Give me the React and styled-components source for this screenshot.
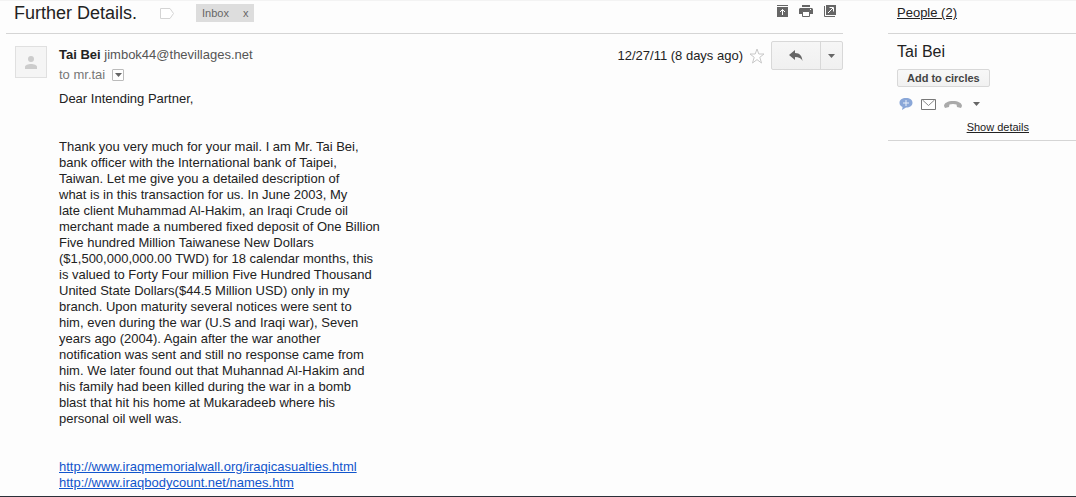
import React from "react";
import styled, { createGlobalStyle } from "styled-components";

const paragraph = [
  "Thank you very much for your mail. I am Mr. Tai Bei,",
  "bank officer with the International bank of Taipei,",
  "Taiwan. Let me give you a detailed description of",
  "what is in this transaction for us. In June 2003, My",
  "late client Muhammad Al-Hakim, an Iraqi Crude oil",
  "merchant made a numbered fixed deposit of One Billion",
  "Five hundred Million Taiwanese New Dollars",
  "($1,500,000,000.00 TWD) for 18 calendar months, this",
  "is valued to Forty Four million Five Hundred Thousand",
  "United State Dollars($44.5 Million USD) only in my",
  "branch. Upon maturity several notices were sent to",
  "him, even during the war (U.S and Iraqi war), Seven",
  "years ago (2004). Again after the war another",
  "notification was sent and still no response came from",
  "him. We later found out that Muhannad Al-Hakim and",
  "his family had been killed during the war in a bomb",
  "blast that hit his home at Mukaradeeb where his",
  "personal oil well was.",
].join("\n");

const links = [
  "http://www.iraqmemorialwall.org/iraqicasualties.html",
  "http://www.iraqbodycount.net/names.htm",
];

function Arrow({ color = "#666" }) {
  return (
    <svg width="7" height="4" viewBox="0 0 7 4">
      <path d="M0 0h7L3.5 4z" fill={color} />
    </svg>
  );
}

function ThreadHeader() {
  return (
    <Heading>
      <Subject>Further Details.</Subject>
      <IconButton aria-label="Importance">
        <svg width="14" height="11" viewBox="0 0 14 11">
          <path d="M.5.5h9.500l3.500 5-3.500 5H.5z" fill="#fff" stroke="#d4d4d4" />
        </svg>
      </IconButton>
      <Label>
        Inbox <LabelClose aria-label="Remove label Inbox">x</LabelClose>
      </Label>
      <Actions>
        <IconButton aria-label="Collapse all">
          <svg width="11" height="12" viewBox="0 0 11 12">
            <path d="M0 0h11v1H0zM0 2h11v10H0z" fill="#666" />
            <path d="M5.5 10V4.5M3 7l2.5-2.5L8 7" fill="none" stroke="#fff" />
          </svg>
        </IconButton>
        <IconButton aria-label="Print all">
          <svg width="14" height="12" viewBox="0 0 14 12">
            <path d="M3 0h8v2H3zM1 3h12l1 1v5h-3V7H3v2H0V4z" fill="#666" />
            <path d="M3.5 6.5h7v5h-7z" fill="#fff" stroke="#666" />
            <path d="M11 4h1v1h-1z" fill="#fff" />
          </svg>
        </IconButton>
        <IconButton aria-label="In new window">
          <svg width="12" height="12" viewBox="0 0 12 12">
            <path d="M2 0h10v10H2z" fill="#666" />
            <path d="M.5 1v10.500H11" fill="none" stroke="#666" />
            <path d="M4 8l5-5M5.500 2.500H9.500V6.500" fill="none" stroke="#fff" />
          </svg>
        </IconButton>
      </Actions>
    </Heading>
  );
}

function Message() {
  return (
    <Mail>
      <Avatar>
        <svg width="12" height="13" viewBox="0 0 12 13">
          <circle cx="6" cy="3" r="3" fill="#ccc" />
          <path d="M0 13v-2c0-2 3-3 6-3s6 1 6 3v2z" fill="#ccc" />
        </svg>
      </Avatar>
      <MailContent>
        <MailTop>
          <div>
            <Sender>
              <strong>Tai Bei</strong> <span>jimbok44@thevillages.net</span>
            </Sender>
            <Recipient>
              to mr.tai
              <DetailsButton aria-label="Show message details">
                <Arrow />
              </DetailsButton>
            </Recipient>
          </div>
          <MailTools>
            <time>12/27/11 (8 days ago)</time>
            <IconButton aria-label="Star">
              <svg width="16" height="16" viewBox="0 0 16 16">
                <path
                  d="M8 1l1.800 5H15l-4.200 3.300L12.500 15 8 11.600 3.500 15l1.700-5.700L1 6h5.200z"
                  fill="#fff"
                  stroke="#c8c8c8"
                />
              </svg>
            </IconButton>
            <ReplyGroup>
              <ReplyButton aria-label="Reply">
                <svg width="14" height="11" viewBox="0 0 14 11">
                  <path d="M0 5l6-5v3c5 0 7 3 7.500 8C12 8 10 7 6 7v3z" fill="#666" />
                </svg>
              </ReplyButton>
              <MoreButton aria-label="More">
                <Arrow />
              </MoreButton>
            </ReplyGroup>
          </MailTools>
        </MailTop>
        <Body>
          <p>Dear Intending Partner,</p>
          <p>{paragraph}</p>
          <p>
            {links.map((link) => (
              <MailLink key={link} href={link}>
                {link}
              </MailLink>
            ))}
          </p>
        </Body>
      </MailContent>
    </Mail>
  );
}

function People() {
  return (
    <Sidebar>
      <SidebarTop>
        <PlainLink href="#people">People (2)</PlainLink>
      </SidebarTop>
      <Card>
        <Name>Tai Bei</Name>
        <CircleButton>Add to circles</CircleButton>
        <ContactRow>
          <IconButton aria-label="Chat">
            <svg width="14" height="12" viewBox="0 0 14 12">
              <path
                d="M7 0c4 0 6.500 2 6.500 4.800S11 9.600 7 9.600L3 12l.6-3C1.500 8.300.5 6.800.5 4.800.5 2 3 0 7 0z"
                fill="#8aa7d8"
              />
              <path d="M7 2v6M4 5h6" stroke="#e8effa" />
            </svg>
          </IconButton>
          <IconButton aria-label="Email">
            <svg width="15" height="11" viewBox="0 0 15 11">
              <path d="M.5.5h14v10H.5z" fill="#fff" stroke="#777" />
              <path d="M1.500 1l6 5.500 6-5.500" fill="none" stroke="#888" />
            </svg>
          </IconButton>
          <IconButton aria-label="Call">
            <svg width="18" height="7" viewBox="0 0 18 7">
              <path
                d="M0 5c0-3 4-5 9-5s9 2 9 5l-1 2-4-1-.5-2.500c-2-.8-5-.8-7 0L5 6 1 7z"
                fill="#aaa"
              />
            </svg>
          </IconButton>
          <IconButton aria-label="More contact options">
            <Arrow />
          </IconButton>
        </ContactRow>
        <Details>
          <PlainLink href="#details">Show details</PlainLink>
        </Details>
      </Card>
    </Sidebar>
  );
}

export default function App() {
  return (
    <>
      <GlobalStyle />
      <Page>
        <main>
          <ThreadHeader />
          <Message />
        </main>
        <People />
      </Page>
    </>
  );
}

const GlobalStyle = createGlobalStyle`
  * {
    box-sizing: border-box;
  }
  body {
    margin: 0;
    background: #fdfdfd;
    color: #222;
    font-family: "Liberation Sans", Arial, sans-serif;
    font-size: 13px;
    line-height: 16px;
  }
  button {
    padding: 0;
    font-family: inherit;
    cursor: pointer;
  }
  svg {
    display: block;
  }
`;

const Page = styled.div`
  display: grid;
  grid-template-columns: minmax(0, 1fr) 188px;
  column-gap: 45px;
  min-height: 100vh;
  padding-left: 6px;
  border-top: 1px solid #f3f3f3;
  border-bottom: 1px solid #2b3038;
`;

const Heading = styled.header`
  display: flex;
  align-items: center;
  height: 33px;
  padding: 0 7px 8px 8px;
  border-bottom: 1px solid #d5d5d5;
`;

const Subject = styled.h1`
  margin: 0 23px 0 0;
  font-size: 18px;
  font-weight: 400;
  line-height: 24px;
`;

const IconButton = styled.button`
  border: none;
  background: none;
`;

const Label = styled.span`
  display: flex;
  gap: 14px;
  margin-left: 22px;
  padding: 1px 6px;
  background: #ddd;
  color: #666;
  font-size: 11px;
`;

const LabelClose = styled.button`
  border: none;
  background: none;
  color: #666;
  font-size: 11px;
`;

const Actions = styled.div`
  display: flex;
  align-self: flex-start;
  gap: 11px;
  margin-left: auto;
  padding-top: 4px;
`;

const Mail = styled.article`
  display: flex;
  gap: 12px;
  padding: 7px 0 0 9px;
`;

const Avatar = styled.div`
  display: flex;
  align-items: center;
  justify-content: center;
  width: 32px;
  height: 32px;
  margin-top: 5px;
  border: 1px solid #e0e0e0;
  background: #f5f5f5;
`;

const MailContent = styled.div`
  flex: 1;
`;

const MailTop = styled.div`
  display: flex;
  justify-content: space-between;
  align-items: flex-start;
`;

const Sender = styled.div`
  padding-top: 6px;

  span {
    color: #555;
  }
`;

const Recipient = styled.div`
  display: flex;
  align-items: center;
  gap: 7px;
  padding-top: 4px;
  color: #777;
`;

const DetailsButton = styled.button`
  display: flex;
  align-items: center;
  justify-content: center;
  width: 12px;
  height: 12px;
  border: 1px solid #bbb;
  border-radius: 1px;
  background: #fff;
`;

const MailTools = styled.div`
  display: flex;
  align-items: center;
  gap: 6px;
`;

const ReplyGroup = styled.div`
  display: flex;
  height: 29px;
  border: 1px solid #d8d8d8;
  border-radius: 2px;
  background: linear-gradient(#f6f6f6, #f0f0f0);
`;

const ReplyButton = styled.button`
  display: flex;
  align-items: center;
  justify-content: center;
  width: 49px;
  border: none;
  border-right: 1px solid #d8d8d8;
  background: none;
`;

const MoreButton = styled(ReplyButton)`
  width: 21px;
  border-right: none;
`;

const Body = styled.div`
  padding-top: 8px;

  p {
    margin: 0 0 32px;
    white-space: pre-line;
  }
  p:last-child {
    margin-bottom: 0;
  }
`;

const MailLink = styled.a`
  display: table;
  color: #15c;
`;

const Sidebar = styled.aside`
  min-width: 0;
`;

const SidebarTop = styled.div`
  height: 33px;
  padding: 4px 9px;
  border-bottom: 1px solid #d5d5d5;
`;

const PlainLink = styled.a`
  color: #222;
`;

const Card = styled.section`
  padding: 8px 9px 5px;
  border-bottom: 1px solid #d5d5d5;
`;

const Name = styled.h2`
  margin: 0 0 7px;
  font-size: 16px;
  font-weight: 400;
  line-height: 20px;
`;

const CircleButton = styled.button`
  display: block;
  height: 18px;
  padding: 0 9px;
  border: 1px solid #d8d8d8;
  border-radius: 2px;
  background: linear-gradient(#f8f8f8, #f1f1f1);
  color: #444;
  font-size: 11px;
  font-weight: 700;
  line-height: 16px;
`;

const ContactRow = styled.div`
  display: flex;
  align-items: center;
  gap: 8px;
  height: 16px;
  margin-top: 9px;
  padding-left: 2px;

  button:last-child {
    margin-left: 3px;
  }
`;

const Details = styled.div`
  margin-top: 7px;
  padding-right: 38px;
  font-size: 11px;
  text-align: right;
`;
